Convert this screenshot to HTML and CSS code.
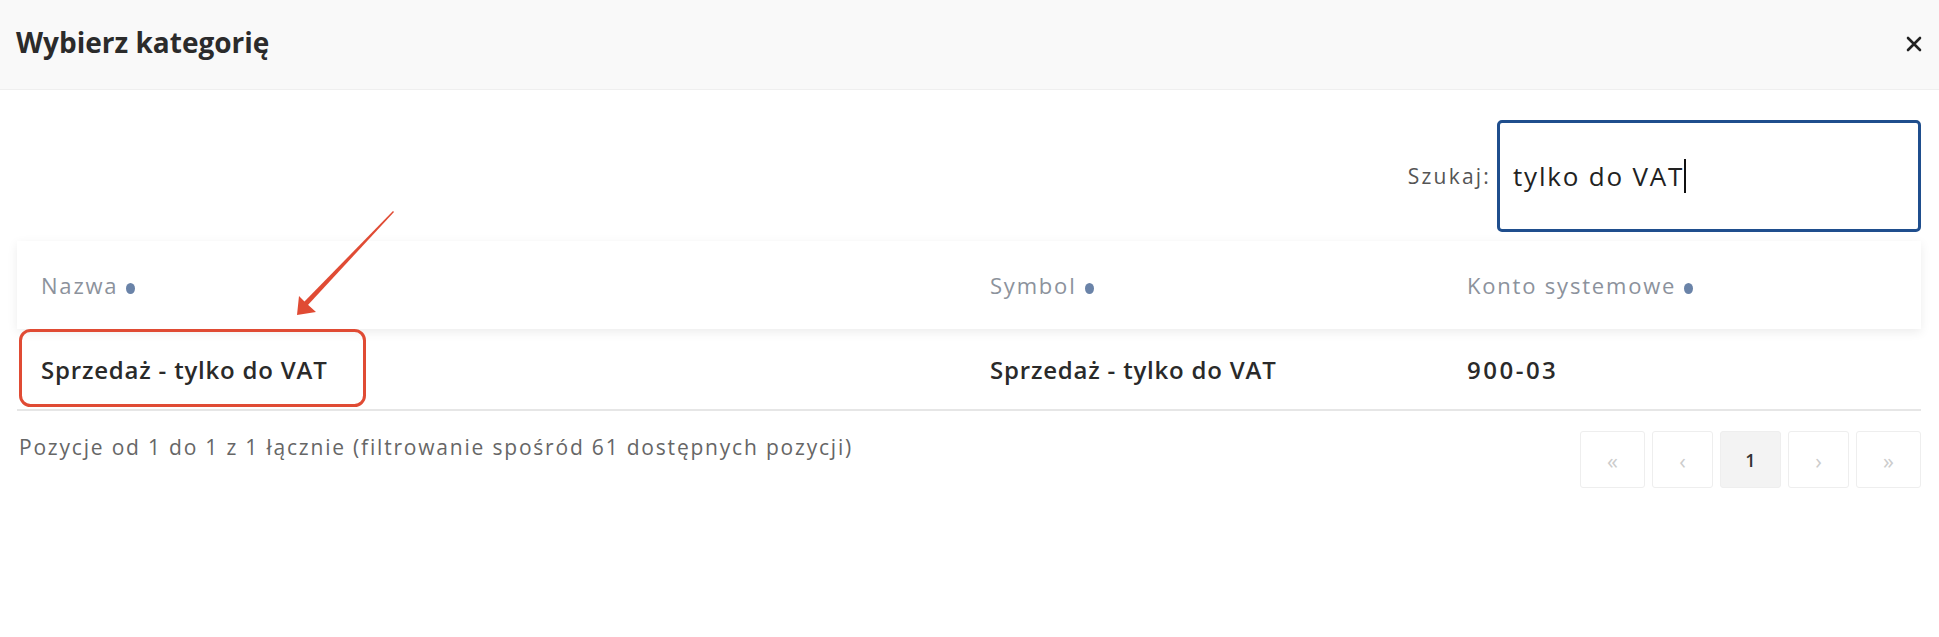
FILE: index.html
```html
<!DOCTYPE html>
<html lang="pl">
<head>
<meta charset="utf-8">
<title>Wybierz kategorię</title>
<link rel="stylesheet" href="styles.css">
</head>
<body>
<div class="modal">
  <div class="modal-header">
    <h1 class="modal-title">Wybierz kategorię</h1>
    <button class="close" aria-label="Zamknij">
      <svg width="16" height="16" viewBox="0 0 16 16"><path d="M2 2L14 14M14 2L2 14" stroke="#222" stroke-width="2.6" stroke-linecap="round"/></svg>
    </button>
  </div>
  <div class="modal-body">
    <div class="search-row">
      <label class="search-label" for="q">Szukaj:</label>
      <div class="search-input" id="q"><span>tylko do VAT</span><span class="caret"></span></div>
    </div>
    <div class="table">
      <div class="thead">
        <div class="th">Nazwa <span class="sort"></span></div>
        <div class="th">Symbol <span class="sort"></span></div>
        <div class="th">Konto systemowe <span class="sort"></span></div>
      </div>
      <div class="tr">
        <div class="td">Sprzedaż - tylko do VAT</div>
        <div class="td">Sprzedaż - tylko do VAT</div>
        <div class="td">900-03</div>
      </div>
    </div>
    <div class="footer">
      <div class="info">Pozycje od 1 do 1 z 1 łącznie (filtrowanie spośród 61 dostępnych pozycji)</div>
      <div class="pager">
        <span class="page dis">«</span>
        <span class="page dis">‹</span>
        <span class="page active">1</span>
        <span class="page dis">›</span>
        <span class="page dis">»</span>
      </div>
    </div>
  </div>
</div>
<svg class="annot" width="1939" height="637" viewBox="0 0 1939 637">
  <rect x="20.5" y="330.5" width="344" height="75" rx="10" ry="10" fill="none" stroke="#e04b34" stroke-width="3"/>
  <polygon points="393,211 394,212 307,306 303,303" fill="#e04b34"/>
  <polygon points="297,315 299,296 306,303 316,312" fill="#e04b34"/>
</svg>
</body>
</html>
```
FILE: styles.css
```css
html, body {
  margin: 0;
  padding: 0;
  background: #fff;
}
body {
  font-family: "Open Sans", "Noto Sans", sans-serif;
  color: #333;
  position: relative;
  width: 1939px;
  height: 637px;
  overflow: hidden;
}
.modal-header {
  height: 90px;
  box-sizing: border-box;
  background: #f9f9f9;
  border-bottom: 1px solid #efefef;
  display: flex;
  align-items: center;
  justify-content: space-between;
  padding: 0 17px 6px 16px;
}
.modal-title {
  margin: 0;
  font-size: 28px;
  font-weight: 700;
  color: #2b2b2b;
}
.close {
  border: 0;
  background: none;
  padding: 0;
  width: 16px;
  height: 16px;
  display: flex;
  margin-top: 4px;
}
.modal-body {
  padding: 0 18px 0 17px;
}
.search-row {
  display: flex;
  justify-content: flex-end;
  align-items: center;
  gap: 6px;
  margin-top: 30px;
}
.search-label {
  font-size: 21px;
  letter-spacing: 2.2px;
  color: #555;
}
.search-input {
  width: 424px;
  height: 112px;
  box-sizing: border-box;
  border: 3px solid #1f4e8d;
  border-radius: 5px;
  padding: 0 13px;
  display: flex;
  align-items: center;
  font-size: 26px;
  letter-spacing: 1.8px;
  color: #222;
}
.caret {
  display: inline-block;
  width: 2px;
  height: 34px;
  background: #111;
  margin-left: 0;
}
.table {
  margin-top: 9px;
}
.thead, .tr {
  display: grid;
  grid-template-columns: 949px 477px 1fr;
}
.thead {
  height: 88px;
  align-items: center;
  background: #fff;
  box-shadow: 0 3px 10px rgba(0,0,0,0.08);
  position: relative;
}
.th {
  padding-left: 24px;
  font-size: 22px;
  letter-spacing: 1.8px;
  color: #8c929c;
  display: flex;
  align-items: center;
  gap: 8px;
}
.sort {
  width: 9px;
  height: 11px;
  border-radius: 50%;
  background: #6a83a8;
  display: inline-block;
  margin-top: 6px;
}
.tr {
  height: 80px;
  align-items: center;
  border-bottom: 2px solid #e6e6e6;
}
.td {
  padding-left: 24px;
  font-size: 24px;
  letter-spacing: 0.8px;
  font-weight: 600;
  color: #2a2a2a;
}
.td:last-child {
  letter-spacing: 2.5px;
}
.footer {
  display: flex;
  justify-content: space-between;
  align-items: flex-start;
  margin-top: 20px;
}
.info {
  font-size: 21px;
  letter-spacing: 1.8px;
  color: #666;
  padding-left: 2px;
  margin-top: 2px;
}
.pager {
  display: flex;
  gap: 7px;
}
.page {
  width: 61px;
  height: 57px;
  box-sizing: border-box;
  border: 1px solid #eee;
  border-radius: 3px;
  display: flex;
  align-items: center;
  justify-content: center;
  font-size: 22px;
  color: #ccc;
}
.page:first-child, .page:last-child {
  width: 65px;
}
.page.active {
  background: #f3f3f3;
  color: #333;
  font-size: 18px;
  font-weight: 600;
}
.annot {
  position: absolute;
  left: 0;
  top: 0;
  pointer-events: none;
}
```
